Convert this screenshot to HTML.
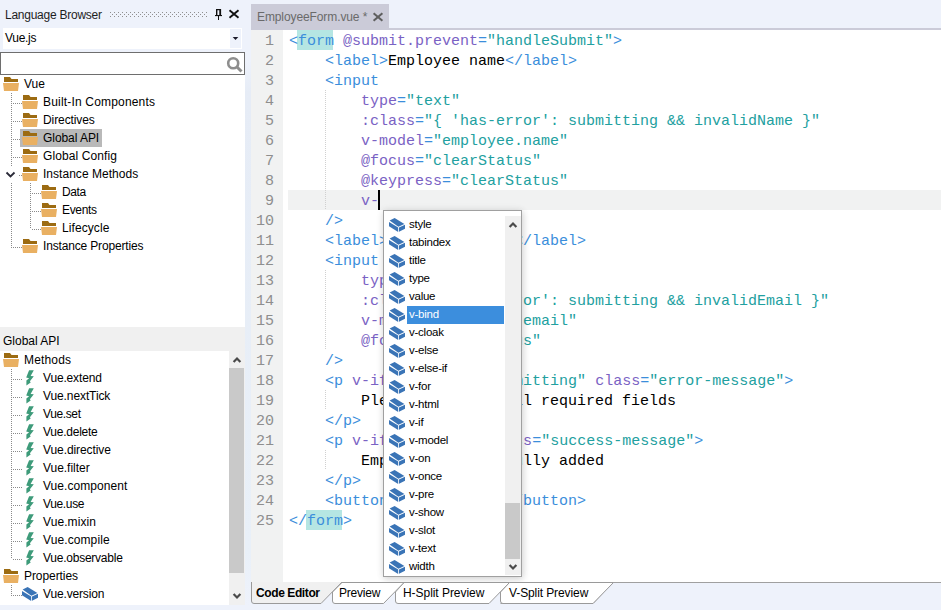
<!DOCTYPE html>
<html><head><meta charset="utf-8"><style>
*{box-sizing:border-box}
body{margin:0;width:941px;height:610px;background:#EEF2FB;position:relative;overflow:hidden;font-family:"Liberation Sans",sans-serif;font-size:12px;color:#000}
.a{position:absolute}
.t{position:absolute;white-space:pre;line-height:18px;height:18px}
.code{position:absolute;left:289px;font-family:"Liberation Mono",monospace;font-size:15px;line-height:20px;white-space:pre;color:#000}
.tg{color:#3B8EDB}.at{color:#7A62C4}.vl{color:#22A0A0}
.ln{position:absolute;left:251px;width:23px;text-align:right;font-family:"Liberation Mono",monospace;font-size:15px;line-height:20px;color:#8E8E8E}
.dv{position:absolute;width:1px;background-image:linear-gradient(#8a8a8a 50%,transparent 50%);background-size:1px 2px}
.dh{position:absolute;height:1px;background-image:linear-gradient(90deg,#8a8a8a 50%,transparent 50%);background-size:2px 1px}
.pi{position:absolute;left:409px;white-space:pre;font-size:11.5px;line-height:18px;color:#000;letter-spacing:-0.25px}
</style></head><body>

<div class="t" style="left:5px;top:6px;letter-spacing:-0.25px;color:#1E1E1E">Language Browser</div>
<svg class="a" style="left:110px;top:12px" width="98" height="5"><defs><pattern id="gp" width="4" height="4" patternUnits="userSpaceOnUse"><rect x="0" y="0" width="1" height="1" fill="#8f8f8f"/><rect x="2" y="2" width="1" height="1" fill="#8f8f8f"/></pattern></defs><rect width="98" height="5" fill="url(#gp)"/></svg>
<svg class="a" style="left:213px;top:7px" width="12" height="14" viewBox="213 7 12 14"><g fill="#111"><rect x="216" y="9" width="5" height="1.2"/><rect x="216" y="9" width="1.4" height="6"/><rect x="219.3" y="9" width="1.8" height="6"/><rect x="215" y="15" width="7" height="1.1"/><rect x="218" y="16" width="1" height="4"/></g></svg>
<svg class="a" style="left:228px;top:9px" width="12" height="10" viewBox="228 9 12 10"><path d="M229.5 10.3L238.5 17.7M238.5 10.3L229.5 17.7" stroke="#111" stroke-width="1.9"/></svg>
<div class="a" style="left:3px;top:28px;width:239px;height:21px;background:#fff"></div>
<div class="a" style="left:230px;top:29px;width:11px;height:19px;background:#EEF2FB"></div>
<svg class="a" style="left:232px;top:36px" width="7" height="5" viewBox="0 0 7 5"><path d="M0.7 1H6.3L3.5 4Z" fill="#1a1a2a"/></svg>
<div class="t" style="left:5px;top:29px;letter-spacing:-0.3px">Vue.js</div>
<div class="a" style="left:0px;top:52px;width:245px;height:23px;background:#fff;border:1px solid #6E6E6E"></div>
<svg class="a" style="left:225px;top:55px" width="20" height="20" viewBox="0 0 20 20"><circle cx="8.2" cy="8.2" r="5" fill="none" stroke="#8E8E8E" stroke-width="2.6"/><path d="M11.5 11.5L16.5 16.5" stroke="#8E8E8E" stroke-width="3"/></svg>
<div class="a" style="left:0;top:75px;width:245px;height:252px;background:#fff"></div>
<div class="dv" style="left:11px;top:93px;height:73px"></div>
<div class="dv" style="left:11px;top:183px;height:65px"></div>
<div class="dh" style="left:13px;top:103px;width:9px"></div>
<div class="dh" style="left:13px;top:121px;width:9px"></div>
<div class="dh" style="left:13px;top:139px;width:9px"></div>
<div class="dh" style="left:13px;top:157px;width:9px"></div>
<div class="dh" style="left:19px;top:175px;width:3px"></div>
<div class="dh" style="left:13px;top:247px;width:9px"></div>
<div class="dv" style="left:30px;top:183px;height:46px"></div>
<div class="dh" style="left:32px;top:193px;width:9px"></div>
<div class="dh" style="left:32px;top:211px;width:9px"></div>
<div class="dh" style="left:32px;top:229px;width:9px"></div>
<div class="a" style="left:20px;top:129px;width:82px;height:18px;background:#B9B9B9"></div>
<svg class="a" style="left:5px;top:171px" width="11" height="8" viewBox="0 0 11 8"><path d="M1.5 1.5L5.5 5.5L9.5 1.5" fill="none" stroke="#2a2a38" stroke-width="1.8"/></svg>
<svg width="22" height="18" viewBox="3 0 22 18" style="position:absolute;left:3px;top:74px"><path d="M4 3H10L11.5 5H18V8H4Z" fill="#9C6B12"/><path d="M3 9H19L18 17H4Z" fill="#E9B062"/></svg>
<div class="t" style="left:24px;top:75px;letter-spacing:0px">Vue</div>
<svg width="22" height="18" viewBox="3 0 22 18" style="position:absolute;left:22px;top:92px"><path d="M4 3H10L11.5 5H18V8H4Z" fill="#9C6B12"/><path d="M3 9H19L18 17H4Z" fill="#E9B062"/></svg>
<div class="t" style="left:43px;top:93px;letter-spacing:0.18px">Built-In Components</div>
<svg width="22" height="18" viewBox="3 0 22 18" style="position:absolute;left:22px;top:110px"><path d="M4 3H10L11.5 5H18V8H4Z" fill="#9C6B12"/><path d="M3 9H19L18 17H4Z" fill="#E9B062"/></svg>
<div class="t" style="left:43px;top:111px;letter-spacing:-0.09px">Directives</div>
<svg width="22" height="18" viewBox="3 0 22 18" style="position:absolute;left:22px;top:128px"><path d="M4 3H10L11.5 5H18V8H4Z" fill="#9C6B12"/><path d="M3 9H19L18 17H4Z" fill="#E9B062"/></svg>
<div class="t" style="left:43px;top:129px;letter-spacing:-0.06px">Global API</div>
<svg width="22" height="18" viewBox="3 0 22 18" style="position:absolute;left:22px;top:146px"><path d="M4 3H10L11.5 5H18V8H4Z" fill="#9C6B12"/><path d="M3 9H19L18 17H4Z" fill="#E9B062"/></svg>
<div class="t" style="left:43px;top:147px;letter-spacing:0.1px">Global Config</div>
<svg width="22" height="18" viewBox="3 0 22 18" style="position:absolute;left:22px;top:164px"><path d="M4 3H10L11.5 5H18V8H4Z" fill="#9C6B12"/><path d="M3 9H19L18 17H4Z" fill="#E9B062"/></svg>
<div class="t" style="left:43px;top:165px;letter-spacing:0.03px">Instance Methods</div>
<svg width="22" height="18" viewBox="3 0 22 18" style="position:absolute;left:41px;top:182px"><path d="M4 3H10L11.5 5H18V8H4Z" fill="#9C6B12"/><path d="M3 9H19L18 17H4Z" fill="#E9B062"/></svg>
<div class="t" style="left:62px;top:183px;letter-spacing:-0.37px">Data</div>
<svg width="22" height="18" viewBox="3 0 22 18" style="position:absolute;left:41px;top:200px"><path d="M4 3H10L11.5 5H18V8H4Z" fill="#9C6B12"/><path d="M3 9H19L18 17H4Z" fill="#E9B062"/></svg>
<div class="t" style="left:62px;top:201px;letter-spacing:-0.32px">Events</div>
<svg width="22" height="18" viewBox="3 0 22 18" style="position:absolute;left:41px;top:218px"><path d="M4 3H10L11.5 5H18V8H4Z" fill="#9C6B12"/><path d="M3 9H19L18 17H4Z" fill="#E9B062"/></svg>
<div class="t" style="left:62px;top:219px;letter-spacing:0.08px">Lifecycle</div>
<svg width="22" height="18" viewBox="3 0 22 18" style="position:absolute;left:22px;top:236px"><path d="M4 3H10L11.5 5H18V8H4Z" fill="#9C6B12"/><path d="M3 9H19L18 17H4Z" fill="#E9B062"/></svg>
<div class="t" style="left:43px;top:237px;letter-spacing:-0.16px">Instance Properties</div>
<div class="a" style="left:0;top:327px;width:245px;height:24px;background:#F0F0F0"></div>
<div class="t" style="left:3px;top:332px;letter-spacing:0px">Global API</div>
<div class="a" style="left:0;top:351px;width:229px;height:254px;background:#fff"></div>
<div class="a" style="left:229px;top:351px;width:16px;height:254px;background:#F0F0F0"></div>
<div class="a" style="left:229px;top:368px;width:15px;height:205px;background:#C9C9C9"></div>
<svg class="a" style="left:232px;top:355px" width="10" height="9" viewBox="0 0 10 9"><path d="M1.6 7L5 3.5L8.4 7" fill="none" stroke="#4a4a4a" stroke-width="2.2"/></svg>
<svg class="a" style="left:232px;top:592px" width="10" height="9" viewBox="0 0 10 9"><path d="M1.6 2L5 5.5L8.4 2" fill="none" stroke="#4a4a4a" stroke-width="2.2"/></svg>
<svg width="22" height="18" viewBox="3 0 22 18" style="position:absolute;left:3px;top:350px"><path d="M4 3H10L11.5 5H18V8H4Z" fill="#9C6B12"/><path d="M3 9H19L18 17H4Z" fill="#E9B062"/></svg>
<div class="t" style="left:24px;top:351px;letter-spacing:0.17px">Methods</div>
<div class="dv" style="left:11px;top:369px;height:190px"></div>
<div class="dh" style="left:13px;top:379px;width:9px"></div>
<svg width="40" height="18" viewBox="0 0 40 18" style="position:absolute;left:0px;top:369px"><path d="M29.1 1.15L33.8 1.15L30.6 6.9L33.8 7.2L29.9 12.3L30.7 13.4L26.4 16.6L26.4 11.5L29.1 9.2L26.2 8.6Z" fill="#3E9B7A"/></svg>
<div class="t" style="left:43px;top:369px;letter-spacing:-0.16px">Vue.extend</div>
<div class="dh" style="left:13px;top:397px;width:9px"></div>
<svg width="40" height="18" viewBox="0 0 40 18" style="position:absolute;left:0px;top:387px"><path d="M29.1 1.15L33.8 1.15L30.6 6.9L33.8 7.2L29.9 12.3L30.7 13.4L26.4 16.6L26.4 11.5L29.1 9.2L26.2 8.6Z" fill="#3E9B7A"/></svg>
<div class="t" style="left:43px;top:387px;letter-spacing:-0.1px">Vue.nextTick</div>
<div class="dh" style="left:13px;top:415px;width:9px"></div>
<svg width="40" height="18" viewBox="0 0 40 18" style="position:absolute;left:0px;top:405px"><path d="M29.1 1.15L33.8 1.15L30.6 6.9L33.8 7.2L29.9 12.3L30.7 13.4L26.4 16.6L26.4 11.5L29.1 9.2L26.2 8.6Z" fill="#3E9B7A"/></svg>
<div class="t" style="left:43px;top:405px;letter-spacing:-0.38px">Vue.set</div>
<div class="dh" style="left:13px;top:433px;width:9px"></div>
<svg width="40" height="18" viewBox="0 0 40 18" style="position:absolute;left:0px;top:423px"><path d="M29.1 1.15L33.8 1.15L30.6 6.9L33.8 7.2L29.9 12.3L30.7 13.4L26.4 16.6L26.4 11.5L29.1 9.2L26.2 8.6Z" fill="#3E9B7A"/></svg>
<div class="t" style="left:43px;top:423px;letter-spacing:-0.24px">Vue.delete</div>
<div class="dh" style="left:13px;top:451px;width:9px"></div>
<svg width="40" height="18" viewBox="0 0 40 18" style="position:absolute;left:0px;top:441px"><path d="M29.1 1.15L33.8 1.15L30.6 6.9L33.8 7.2L29.9 12.3L30.7 13.4L26.4 16.6L26.4 11.5L29.1 9.2L26.2 8.6Z" fill="#3E9B7A"/></svg>
<div class="t" style="left:43px;top:441px;letter-spacing:-0.08px">Vue.directive</div>
<div class="dh" style="left:13px;top:469px;width:9px"></div>
<svg width="40" height="18" viewBox="0 0 40 18" style="position:absolute;left:0px;top:459px"><path d="M29.1 1.15L33.8 1.15L30.6 6.9L33.8 7.2L29.9 12.3L30.7 13.4L26.4 16.6L26.4 11.5L29.1 9.2L26.2 8.6Z" fill="#3E9B7A"/></svg>
<div class="t" style="left:43px;top:459px;letter-spacing:-0.03px">Vue.filter</div>
<div class="dh" style="left:13px;top:487px;width:9px"></div>
<svg width="40" height="18" viewBox="0 0 40 18" style="position:absolute;left:0px;top:477px"><path d="M29.1 1.15L33.8 1.15L30.6 6.9L33.8 7.2L29.9 12.3L30.7 13.4L26.4 16.6L26.4 11.5L29.1 9.2L26.2 8.6Z" fill="#3E9B7A"/></svg>
<div class="t" style="left:43px;top:477px;letter-spacing:0.05px">Vue.component</div>
<div class="dh" style="left:13px;top:505px;width:9px"></div>
<svg width="40" height="18" viewBox="0 0 40 18" style="position:absolute;left:0px;top:495px"><path d="M29.1 1.15L33.8 1.15L30.6 6.9L33.8 7.2L29.9 12.3L30.7 13.4L26.4 16.6L26.4 11.5L29.1 9.2L26.2 8.6Z" fill="#3E9B7A"/></svg>
<div class="t" style="left:43px;top:495px;letter-spacing:-0.35px">Vue.use</div>
<div class="dh" style="left:13px;top:523px;width:9px"></div>
<svg width="40" height="18" viewBox="0 0 40 18" style="position:absolute;left:0px;top:513px"><path d="M29.1 1.15L33.8 1.15L30.6 6.9L33.8 7.2L29.9 12.3L30.7 13.4L26.4 16.6L26.4 11.5L29.1 9.2L26.2 8.6Z" fill="#3E9B7A"/></svg>
<div class="t" style="left:43px;top:513px;letter-spacing:0.08px">Vue.mixin</div>
<div class="dh" style="left:13px;top:541px;width:9px"></div>
<svg width="40" height="18" viewBox="0 0 40 18" style="position:absolute;left:0px;top:531px"><path d="M29.1 1.15L33.8 1.15L30.6 6.9L33.8 7.2L29.9 12.3L30.7 13.4L26.4 16.6L26.4 11.5L29.1 9.2L26.2 8.6Z" fill="#3E9B7A"/></svg>
<div class="t" style="left:43px;top:531px;letter-spacing:0.1px">Vue.compile</div>
<div class="dh" style="left:13px;top:559px;width:9px"></div>
<svg width="40" height="18" viewBox="0 0 40 18" style="position:absolute;left:0px;top:549px"><path d="M29.1 1.15L33.8 1.15L30.6 6.9L33.8 7.2L29.9 12.3L30.7 13.4L26.4 16.6L26.4 11.5L29.1 9.2L26.2 8.6Z" fill="#3E9B7A"/></svg>
<div class="t" style="left:43px;top:549px;letter-spacing:-0.24px">Vue.observable</div>
<svg width="22" height="18" viewBox="3 0 22 18" style="position:absolute;left:3px;top:566px"><path d="M4 3H10L11.5 5H18V8H4Z" fill="#9C6B12"/><path d="M3 9H19L18 17H4Z" fill="#E9B062"/></svg>
<div class="t" style="left:24px;top:567px;letter-spacing:-0.07px">Properties</div>
<div class="dv" style="left:11px;top:585px;height:11px"></div>
<div class="dh" style="left:13px;top:595px;width:9px"></div>
<svg width="22" height="20" viewBox="0 0 22 20" style="position:absolute;left:19px;top:584px"><path d="M3.6 5.4L8.6 3L18.4 9L12.4 11.8Z" fill="#3A74B6"/><path d="M3 7L12.2 12.6V17L3 11.2Z" fill="#3A74B6"/><path d="M13 12.4L19 9.8V13.8L13 16.8Z" fill="#3A74B6"/></svg>
<div class="t" style="left:43px;top:585px;letter-spacing:-0.15px">Vue.version</div>
<div class="a" style="left:245px;top:60px;width:6px;height:545px;background:linear-gradient(#EEF2FB,#E6ECF6 6%,#E9F0F8 90%,#EEF2FB)"></div>
<div class="a" style="left:251px;top:4px;width:138px;height:24px;background:#CBCBD8"></div>
<div class="t" style="left:257px;top:8px;color:#6A6A6A;letter-spacing:-0.1px">EmployeeForm.vue *</div>
<svg class="a" style="left:372px;top:12px" width="12" height="10" viewBox="0 0 12 10"><path d="M1.6 1.2L10.4 8.8M10.4 1.2L1.6 8.8" stroke="#5E5E5E" stroke-width="2"/></svg>
<div class="a" style="left:251px;top:28px;width:690px;height:2px;background:#CBCBD8"></div>
<div class="a" style="left:251px;top:30px;width:690px;height:552px;background:#fff"></div>
<div class="a" style="left:251px;top:30px;width:32px;height:552px;background:#F1F2F2"></div>
<div class="a" style="left:288px;top:190px;width:653px;height:20px;background:#F1F2F2"></div>
<div class="a" style="left:325px;top:90px;width:1px;height:120px;background-image:linear-gradient(#d0d0d0 50%,transparent 50%);background-size:1px 2px"></div>
<div class="a" style="left:325px;top:270px;width:1px;height:80px;background-image:linear-gradient(#d0d0d0 50%,transparent 50%);background-size:1px 2px"></div>
<div class="a" style="left:325px;top:390px;width:1px;height:20px;background-image:linear-gradient(#d0d0d0 50%,transparent 50%);background-size:1px 2px"></div>
<div class="a" style="left:325px;top:450px;width:1px;height:20px;background-image:linear-gradient(#d0d0d0 50%,transparent 50%);background-size:1px 2px"></div>
<div class="a" style="left:297px;top:30px;width:36px;height:20px;background:#B5E6E3"></div>
<div class="a" style="left:306px;top:510px;width:36px;height:20px;background:#B5E6E3"></div>
<div class="ln" style="top:32px">1</div>
<div class="code" style="top:32px"><span class="tg">&lt;form</span> <span class="at">@submit.prevent</span><span class="tg">=</span><span class="vl">&quot;handleSubmit&quot;</span><span class="tg">&gt;</span></div>
<div class="ln" style="top:52px">2</div>
<div class="code" style="top:52px">    <span class="tg">&lt;label&gt;</span>Employee name<span class="tg">&lt;/label&gt;</span></div>
<div class="ln" style="top:72px">3</div>
<div class="code" style="top:72px">    <span class="tg">&lt;input</span></div>
<div class="ln" style="top:92px">4</div>
<div class="code" style="top:92px">        <span class="at">type</span><span class="tg">=</span><span class="vl">&quot;text&quot;</span></div>
<div class="ln" style="top:112px">5</div>
<div class="code" style="top:112px">        <span class="at">:class</span><span class="tg">=</span><span class="vl">&quot;{ &#x27;has-error&#x27;: submitting &amp;&amp; invalidName }&quot;</span></div>
<div class="ln" style="top:132px">6</div>
<div class="code" style="top:132px">        <span class="at">v-model</span><span class="tg">=</span><span class="vl">&quot;employee.name&quot;</span></div>
<div class="ln" style="top:152px">7</div>
<div class="code" style="top:152px">        <span class="at">@focus</span><span class="tg">=</span><span class="vl">&quot;clearStatus&quot;</span></div>
<div class="ln" style="top:172px">8</div>
<div class="code" style="top:172px">        <span class="at">@keypress</span><span class="tg">=</span><span class="vl">&quot;clearStatus&quot;</span></div>
<div class="ln" style="top:192px">9</div>
<div class="code" style="top:192px">        <span class="at">v-</span></div>
<div class="ln" style="top:212px">10</div>
<div class="code" style="top:212px">    <span class="tg">/&gt;</span></div>
<div class="ln" style="top:232px">11</div>
<div class="code" style="top:232px">    <span class="tg">&lt;label&gt;</span>Employee email<span class="tg">&lt;/label&gt;</span></div>
<div class="ln" style="top:252px">12</div>
<div class="code" style="top:252px">    <span class="tg">&lt;input</span></div>
<div class="ln" style="top:272px">13</div>
<div class="code" style="top:272px">        <span class="at">type</span><span class="tg">=</span><span class="vl">&quot;text&quot;</span></div>
<div class="ln" style="top:292px">14</div>
<div class="code" style="top:292px">        <span class="at">:class</span><span class="tg">=</span><span class="vl">&quot;{ &#x27;has-error&#x27;: submitting &amp;&amp; invalidEmail }&quot;</span></div>
<div class="ln" style="top:312px">15</div>
<div class="code" style="top:312px">        <span class="at">v-model</span><span class="tg">=</span><span class="vl">&quot;employee.email&quot;</span></div>
<div class="ln" style="top:332px">16</div>
<div class="code" style="top:332px">        <span class="at">@focus</span><span class="tg">=</span><span class="vl">&quot;clearStatus&quot;</span></div>
<div class="ln" style="top:352px">17</div>
<div class="code" style="top:352px">    <span class="tg">/&gt;</span></div>
<div class="ln" style="top:372px">18</div>
<div class="code" style="top:372px">    <span class="tg">&lt;p</span> <span class="at">v-if</span><span class="tg">=</span><span class="vl">&quot;error &amp;&amp; submitting&quot;</span> <span class="at">class</span><span class="tg">=</span><span class="vl">&quot;error-message&quot;</span><span class="tg">&gt;</span></div>
<div class="ln" style="top:392px">19</div>
<div class="code" style="top:392px">        Please fill out all required fields</div>
<div class="ln" style="top:412px">20</div>
<div class="code" style="top:412px">    <span class="tg">&lt;/p&gt;</span></div>
<div class="ln" style="top:432px">21</div>
<div class="code" style="top:432px">    <span class="tg">&lt;p</span> <span class="at">v-if</span><span class="tg">=</span><span class="vl">&quot;success&quot;</span> <span class="at">class</span><span class="tg">=</span><span class="vl">&quot;success-message&quot;</span><span class="tg">&gt;</span></div>
<div class="ln" style="top:452px">22</div>
<div class="code" style="top:452px">        Employee successfully added</div>
<div class="ln" style="top:472px">23</div>
<div class="code" style="top:472px">    <span class="tg">&lt;/p&gt;</span></div>
<div class="ln" style="top:492px">24</div>
<div class="code" style="top:492px">    <span class="tg">&lt;button&gt;</span>Add Employee<span class="tg">&lt;/button&gt;</span></div>
<div class="ln" style="top:512px">25</div>
<div class="code" style="top:512px"><span class="tg">&lt;/form&gt;</span></div>
<div class="a" style="left:378px;top:190px;width:2px;height:20px;background:#000"></div>
<div class="a" style="left:383px;top:210px;width:139px;height:367px;background:#fff;border:1px solid #A0A0A0;box-shadow:1px 2px 7px rgba(0,0,0,0.16),0 0 9px rgba(0,0,0,0.05)"></div>
<div class="a" style="left:505px;top:216px;width:16px;height:359px;background:#F0F0F0"></div>
<div class="a" style="left:505px;top:503px;width:15px;height:56px;background:#C9C9C9"></div>
<svg class="a" style="left:508px;top:220px" width="10" height="9" viewBox="0 0 10 9"><path d="M1.6 7L5 3.5L8.4 7" fill="none" stroke="#4a4a4a" stroke-width="2.2"/></svg>
<svg class="a" style="left:508px;top:563px" width="10" height="9" viewBox="0 0 10 9"><path d="M1.6 2L5 5.5L8.4 2" fill="none" stroke="#4a4a4a" stroke-width="2.2"/></svg>
<svg width="22" height="20" viewBox="0 0 22 20" style="position:absolute;left:386px;top:215px"><path d="M3.6 5.4L8.6 3L18.4 9L12.4 11.8Z" fill="#3A74B6"/><path d="M3 7L12.2 12.6V17L3 11.2Z" fill="#3A74B6"/><path d="M13 12.4L19 9.8V13.8L13 16.8Z" fill="#3A74B6"/></svg>
<div class="pi" style="top:215px;color:#000">style</div>
<svg width="22" height="20" viewBox="0 0 22 20" style="position:absolute;left:386px;top:233px"><path d="M3.6 5.4L8.6 3L18.4 9L12.4 11.8Z" fill="#3A74B6"/><path d="M3 7L12.2 12.6V17L3 11.2Z" fill="#3A74B6"/><path d="M13 12.4L19 9.8V13.8L13 16.8Z" fill="#3A74B6"/></svg>
<div class="pi" style="top:233px;color:#000">tabindex</div>
<svg width="22" height="20" viewBox="0 0 22 20" style="position:absolute;left:386px;top:251px"><path d="M3.6 5.4L8.6 3L18.4 9L12.4 11.8Z" fill="#3A74B6"/><path d="M3 7L12.2 12.6V17L3 11.2Z" fill="#3A74B6"/><path d="M13 12.4L19 9.8V13.8L13 16.8Z" fill="#3A74B6"/></svg>
<div class="pi" style="top:251px;color:#000">title</div>
<svg width="22" height="20" viewBox="0 0 22 20" style="position:absolute;left:386px;top:269px"><path d="M3.6 5.4L8.6 3L18.4 9L12.4 11.8Z" fill="#3A74B6"/><path d="M3 7L12.2 12.6V17L3 11.2Z" fill="#3A74B6"/><path d="M13 12.4L19 9.8V13.8L13 16.8Z" fill="#3A74B6"/></svg>
<div class="pi" style="top:269px;color:#000">type</div>
<svg width="22" height="20" viewBox="0 0 22 20" style="position:absolute;left:386px;top:287px"><path d="M3.6 5.4L8.6 3L18.4 9L12.4 11.8Z" fill="#3A74B6"/><path d="M3 7L12.2 12.6V17L3 11.2Z" fill="#3A74B6"/><path d="M13 12.4L19 9.8V13.8L13 16.8Z" fill="#3A74B6"/></svg>
<div class="pi" style="top:287px;color:#000">value</div>
<div class="a" style="left:407px;top:306px;width:97px;height:18px;background:#3C8EDD"></div>
<svg width="22" height="20" viewBox="0 0 22 20" style="position:absolute;left:386px;top:305px"><path d="M3.6 5.4L8.6 3L18.4 9L12.4 11.8Z" fill="#3A74B6"/><path d="M3 7L12.2 12.6V17L3 11.2Z" fill="#3A74B6"/><path d="M13 12.4L19 9.8V13.8L13 16.8Z" fill="#3A74B6"/></svg>
<div class="pi" style="top:305px;color:#fff">v-bind</div>
<svg width="22" height="20" viewBox="0 0 22 20" style="position:absolute;left:386px;top:323px"><path d="M3.6 5.4L8.6 3L18.4 9L12.4 11.8Z" fill="#3A74B6"/><path d="M3 7L12.2 12.6V17L3 11.2Z" fill="#3A74B6"/><path d="M13 12.4L19 9.8V13.8L13 16.8Z" fill="#3A74B6"/></svg>
<div class="pi" style="top:323px;color:#000">v-cloak</div>
<svg width="22" height="20" viewBox="0 0 22 20" style="position:absolute;left:386px;top:341px"><path d="M3.6 5.4L8.6 3L18.4 9L12.4 11.8Z" fill="#3A74B6"/><path d="M3 7L12.2 12.6V17L3 11.2Z" fill="#3A74B6"/><path d="M13 12.4L19 9.8V13.8L13 16.8Z" fill="#3A74B6"/></svg>
<div class="pi" style="top:341px;color:#000">v-else</div>
<svg width="22" height="20" viewBox="0 0 22 20" style="position:absolute;left:386px;top:359px"><path d="M3.6 5.4L8.6 3L18.4 9L12.4 11.8Z" fill="#3A74B6"/><path d="M3 7L12.2 12.6V17L3 11.2Z" fill="#3A74B6"/><path d="M13 12.4L19 9.8V13.8L13 16.8Z" fill="#3A74B6"/></svg>
<div class="pi" style="top:359px;color:#000">v-else-if</div>
<svg width="22" height="20" viewBox="0 0 22 20" style="position:absolute;left:386px;top:377px"><path d="M3.6 5.4L8.6 3L18.4 9L12.4 11.8Z" fill="#3A74B6"/><path d="M3 7L12.2 12.6V17L3 11.2Z" fill="#3A74B6"/><path d="M13 12.4L19 9.8V13.8L13 16.8Z" fill="#3A74B6"/></svg>
<div class="pi" style="top:377px;color:#000">v-for</div>
<svg width="22" height="20" viewBox="0 0 22 20" style="position:absolute;left:386px;top:395px"><path d="M3.6 5.4L8.6 3L18.4 9L12.4 11.8Z" fill="#3A74B6"/><path d="M3 7L12.2 12.6V17L3 11.2Z" fill="#3A74B6"/><path d="M13 12.4L19 9.8V13.8L13 16.8Z" fill="#3A74B6"/></svg>
<div class="pi" style="top:395px;color:#000">v-html</div>
<svg width="22" height="20" viewBox="0 0 22 20" style="position:absolute;left:386px;top:413px"><path d="M3.6 5.4L8.6 3L18.4 9L12.4 11.8Z" fill="#3A74B6"/><path d="M3 7L12.2 12.6V17L3 11.2Z" fill="#3A74B6"/><path d="M13 12.4L19 9.8V13.8L13 16.8Z" fill="#3A74B6"/></svg>
<div class="pi" style="top:413px;color:#000">v-if</div>
<svg width="22" height="20" viewBox="0 0 22 20" style="position:absolute;left:386px;top:431px"><path d="M3.6 5.4L8.6 3L18.4 9L12.4 11.8Z" fill="#3A74B6"/><path d="M3 7L12.2 12.6V17L3 11.2Z" fill="#3A74B6"/><path d="M13 12.4L19 9.8V13.8L13 16.8Z" fill="#3A74B6"/></svg>
<div class="pi" style="top:431px;color:#000">v-model</div>
<svg width="22" height="20" viewBox="0 0 22 20" style="position:absolute;left:386px;top:449px"><path d="M3.6 5.4L8.6 3L18.4 9L12.4 11.8Z" fill="#3A74B6"/><path d="M3 7L12.2 12.6V17L3 11.2Z" fill="#3A74B6"/><path d="M13 12.4L19 9.8V13.8L13 16.8Z" fill="#3A74B6"/></svg>
<div class="pi" style="top:449px;color:#000">v-on</div>
<svg width="22" height="20" viewBox="0 0 22 20" style="position:absolute;left:386px;top:467px"><path d="M3.6 5.4L8.6 3L18.4 9L12.4 11.8Z" fill="#3A74B6"/><path d="M3 7L12.2 12.6V17L3 11.2Z" fill="#3A74B6"/><path d="M13 12.4L19 9.8V13.8L13 16.8Z" fill="#3A74B6"/></svg>
<div class="pi" style="top:467px;color:#000">v-once</div>
<svg width="22" height="20" viewBox="0 0 22 20" style="position:absolute;left:386px;top:485px"><path d="M3.6 5.4L8.6 3L18.4 9L12.4 11.8Z" fill="#3A74B6"/><path d="M3 7L12.2 12.6V17L3 11.2Z" fill="#3A74B6"/><path d="M13 12.4L19 9.8V13.8L13 16.8Z" fill="#3A74B6"/></svg>
<div class="pi" style="top:485px;color:#000">v-pre</div>
<svg width="22" height="20" viewBox="0 0 22 20" style="position:absolute;left:386px;top:503px"><path d="M3.6 5.4L8.6 3L18.4 9L12.4 11.8Z" fill="#3A74B6"/><path d="M3 7L12.2 12.6V17L3 11.2Z" fill="#3A74B6"/><path d="M13 12.4L19 9.8V13.8L13 16.8Z" fill="#3A74B6"/></svg>
<div class="pi" style="top:503px;color:#000">v-show</div>
<svg width="22" height="20" viewBox="0 0 22 20" style="position:absolute;left:386px;top:521px"><path d="M3.6 5.4L8.6 3L18.4 9L12.4 11.8Z" fill="#3A74B6"/><path d="M3 7L12.2 12.6V17L3 11.2Z" fill="#3A74B6"/><path d="M13 12.4L19 9.8V13.8L13 16.8Z" fill="#3A74B6"/></svg>
<div class="pi" style="top:521px;color:#000">v-slot</div>
<svg width="22" height="20" viewBox="0 0 22 20" style="position:absolute;left:386px;top:539px"><path d="M3.6 5.4L8.6 3L18.4 9L12.4 11.8Z" fill="#3A74B6"/><path d="M3 7L12.2 12.6V17L3 11.2Z" fill="#3A74B6"/><path d="M13 12.4L19 9.8V13.8L13 16.8Z" fill="#3A74B6"/></svg>
<div class="pi" style="top:539px;color:#000">v-text</div>
<svg width="22" height="20" viewBox="0 0 22 20" style="position:absolute;left:386px;top:557px"><path d="M3.6 5.4L8.6 3L18.4 9L12.4 11.8Z" fill="#3A74B6"/><path d="M3 7L12.2 12.6V17L3 11.2Z" fill="#3A74B6"/><path d="M13 12.4L19 9.8V13.8L13 16.8Z" fill="#3A74B6"/></svg>
<div class="pi" style="top:557px;color:#000">width</div>
<div class="a" style="left:251px;top:582px;width:690px;height:1px;background:#A0A0A0"></div>
<svg class="a" style="left:245px;top:575px" width="400" height="35" viewBox="245 575 400 35">
<path d="M500.5 603.5 H593 L613 582.5" fill="#fff" stroke="#9A9A9A" stroke-width="1"/>
<path d="M500.5 592 V601 Q500.5 603.5 503 603.5 H593 L613.5 582.5 H509.5 Z" fill="#fff" stroke="#9A9A9A"/>
<path d="M395.5 592 V601 Q395.5 603.5 398 603.5 H489 L509.5 582.5 H404 Z" fill="#fff" stroke="#9A9A9A"/>
<path d="M332.5 592 V601 Q332.5 603.5 335 603.5 H383.5 L404 582.5 H342 Z" fill="#fff" stroke="#9A9A9A"/>
<path d="M251.5 582 V601 Q251.5 603.5 254 603.5 H321 L341.5 582.5 H251.5" fill="#F0F0F0" stroke="#9A9A9A"/>
<path d="M252 582.5 H341" stroke="#F0F0F0" stroke-width="1"/>
</svg>
<div class="t" style="left:256px;top:584px;font-weight:bold;color:#000;letter-spacing:-0.4px">Code Editor</div>
<div class="t" style="left:339px;top:584px;color:#000;letter-spacing:-0.2px">Preview</div>
<div class="t" style="left:403px;top:584px;color:#000;letter-spacing:-0.05px">H-Split Preview</div>
<div class="t" style="left:509px;top:584px;color:#000;letter-spacing:-0.1px">V-Split Preview</div>
</body></html>
